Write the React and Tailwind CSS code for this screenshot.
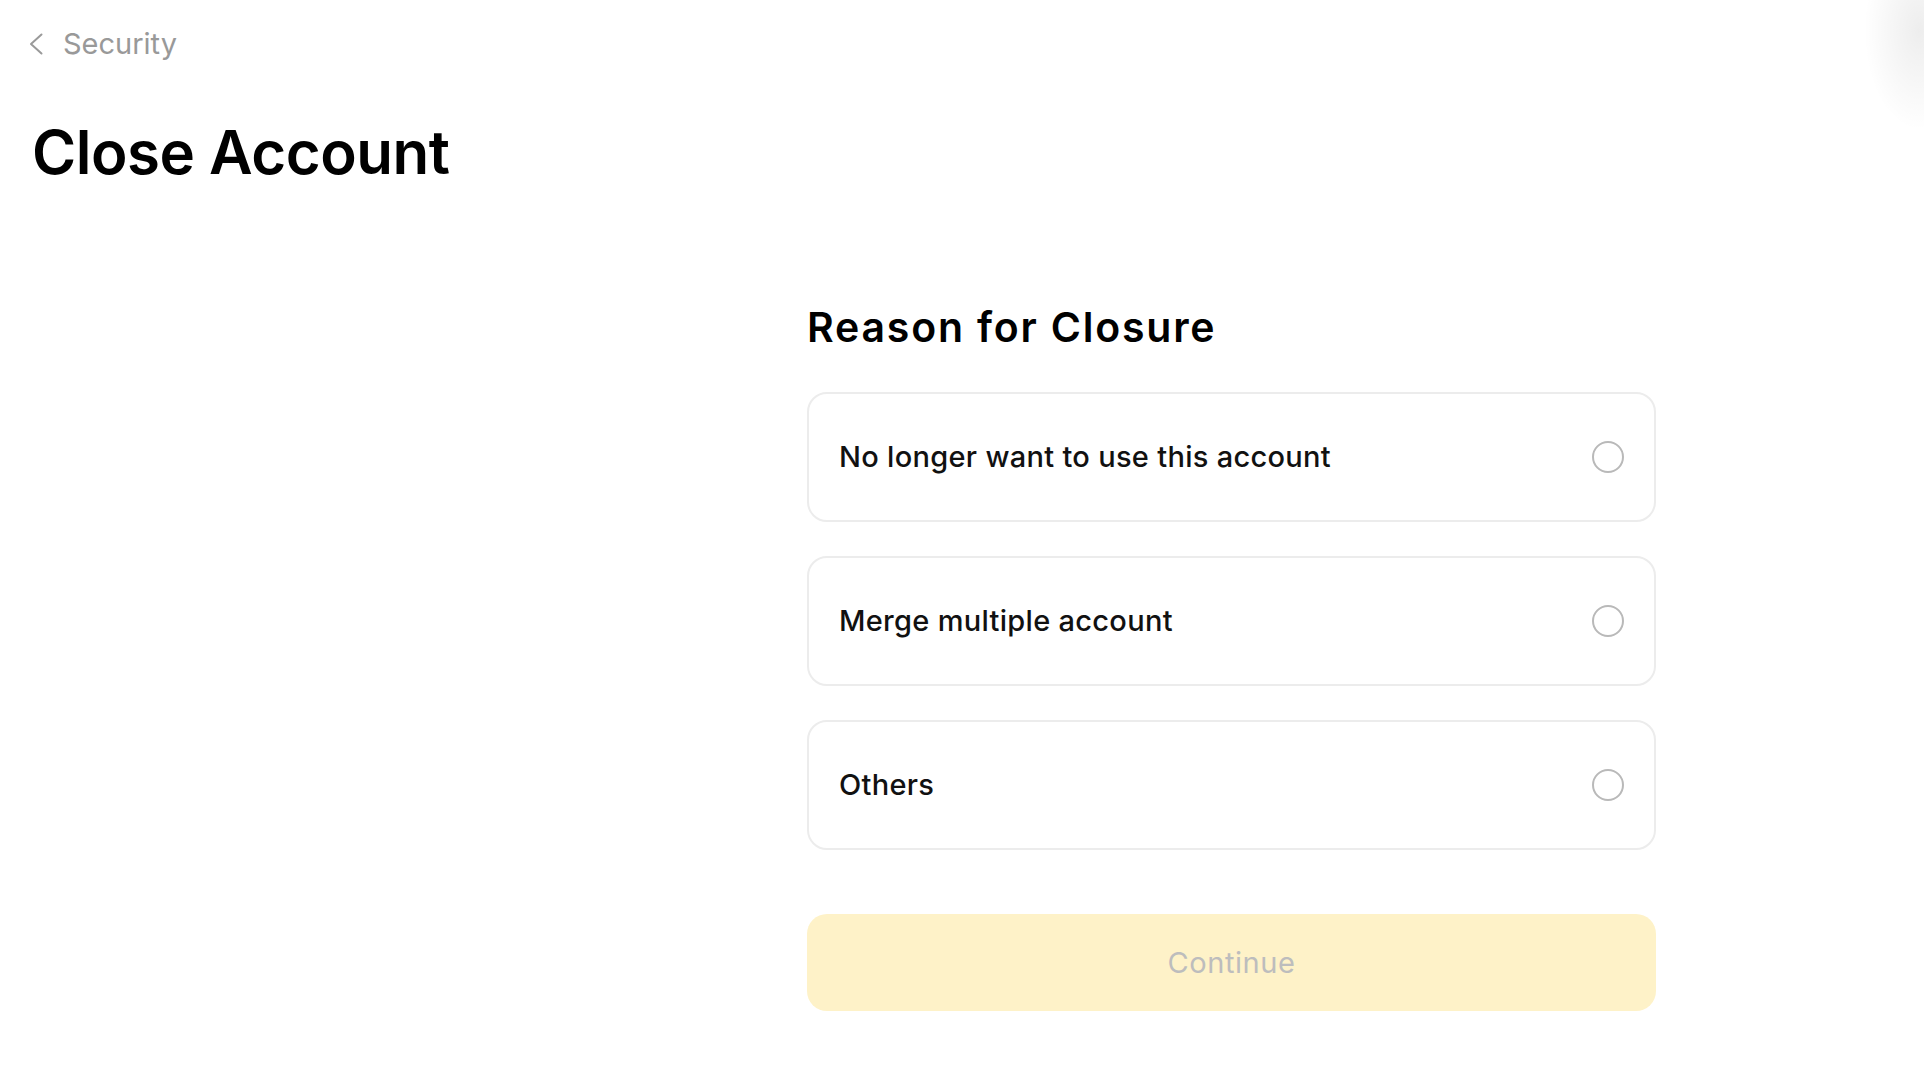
const reasons = ["No longer want to use this account", "Merge multiple account", "Others"];

export default function App() {
  return (
    <div className="relative min-h-screen w-full overflow-hidden bg-white font-['Inter','Liberation_Sans',sans-serif] text-black">
      <div className="pointer-events-none absolute -right-[50px] -top-[70px] h-[200px] w-[110px] rounded-full bg-[radial-gradient(closest-side,rgba(0,0,0,0.07),rgba(0,0,0,0))]" />

      <div className="flex items-center gap-[20px] pl-[29px] pt-[26px]">
        <svg width="14" height="22" viewBox="0 0 14 22" fill="none" className="text-[#9a9a9a]">
          <polyline points="12.5,1.5 2,11 12.5,20.5" stroke="currentColor" strokeWidth="2" strokeLinecap="round" strokeLinejoin="round" />
        </svg>
        <span className="text-[29px] leading-[36px] font-normal text-[#999999]">Security</span>
      </div>

      <h1 className="mt-[54px] pl-[32px] text-[60px] leading-[72px] font-semibold tracking-[-0.5px]">Close Account</h1>

      <div className="mt-[115px] pl-[807px]">
        <div className="w-[849px]">
          <h2 className="text-[41px] leading-[48px] font-semibold tracking-[1.8px]">Reason for Closure</h2>

          <div className="mt-[41px] flex flex-col gap-[34px]">
            {reasons.map((r) => (
              <label
                key={r}
                className="flex h-[130px] cursor-pointer items-center justify-between rounded-[20px] border-2 border-[#ececec] bg-white pl-[30px] pr-[30px]"
              >
                <span className="text-[29px] font-medium tracking-[0.3px] text-[#111]">{r}</span>
                <span className="h-[32px] w-[32px] rounded-full border-2 border-[#b9b9b9]" />
              </label>
            ))}
          </div>

          <button
            type="button"
            disabled
            className="mt-[64px] flex h-[97px] w-full items-center justify-center rounded-[20px] bg-[#fef2c8] text-[29px] font-normal tracking-[0.6px] text-[#bdbdbd]"
          >
            Continue
          </button>
        </div>
      </div>
    </div>
  );
}
